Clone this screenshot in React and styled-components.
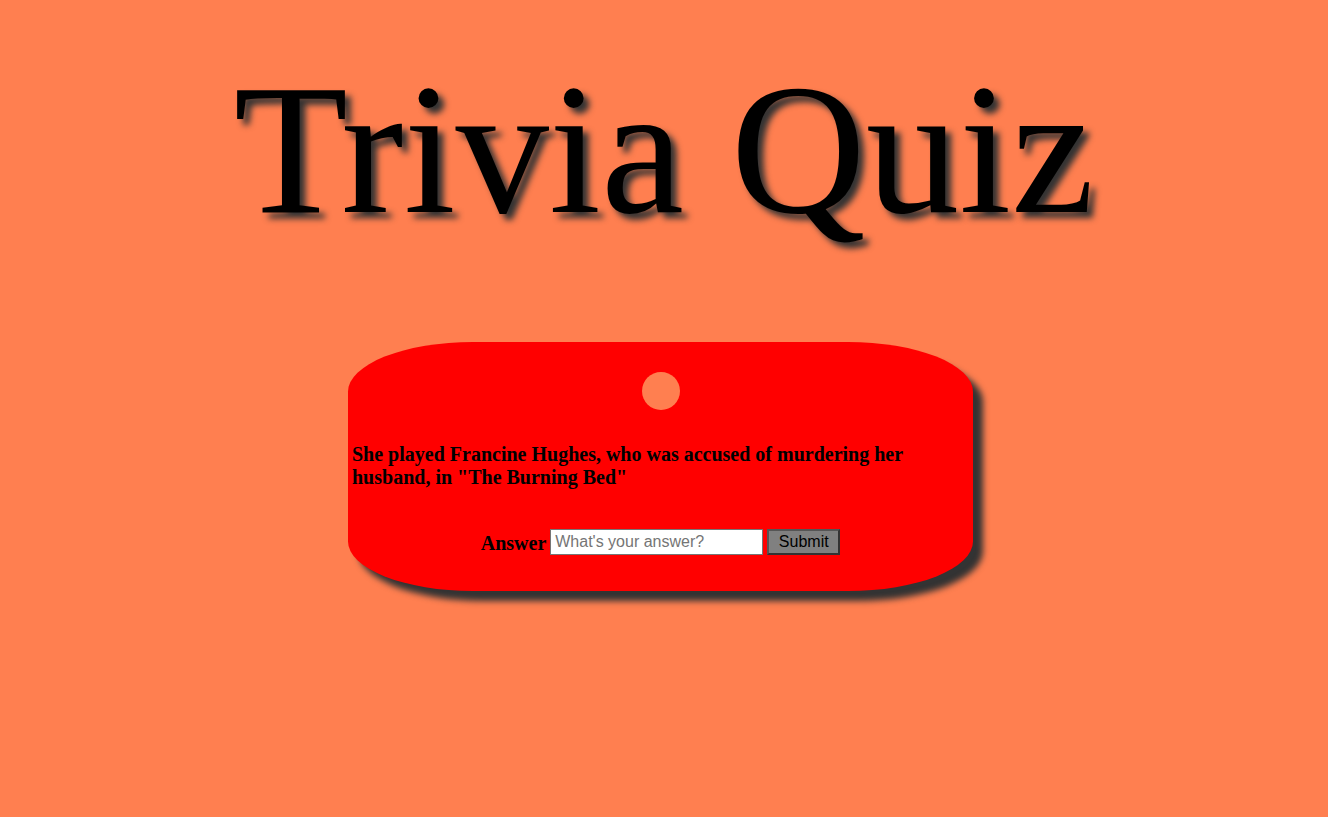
import React from 'react';
import styled, { createGlobalStyle } from 'styled-components';

const GlobalStyle = createGlobalStyle`
  html,
  body {
    background: #ff7f50;
    margin: 0;
    padding: 0;
  }

  body {
    font-family: 'Liberation Serif', 'Times New Roman', serif;
  }
`;

const Page = styled.div`
  min-height: 817px;
  padding-top: 42px;
  box-sizing: border-box;
`;

const Title = styled.h1`
  color: #000;
  font-family: 'Liberation Serif', 'Times New Roman', serif;
  font-size: 187px;
  font-weight: 400;
  line-height: 214px;
  margin: 0;
  text-align: center;
  text-shadow: 6px 6px 6px #333;
`;

const Card = styled.div`
  background: #ff0000;
  border-radius: 20%;
  box-shadow: 10px 10px 6px #333;
  box-sizing: border-box;
  height: 249px;
  margin: 86px 0 0 348px;
  padding: 30px 4px 0;
  width: 625px;
`;

const Hole = styled.div`
  background: #ff7f50;
  border-radius: 50%;
  height: 38px;
  margin: 0 auto;
  width: 38px;
`;

const Question = styled.p`
  font-size: 20px;
  font-weight: 700;
  line-height: 23px;
  margin: 33px 0 0;
  text-align: left;
`;

const AnswerForm = styled.form`
  align-items: center;
  display: flex;
  gap: 4px;
  justify-content: center;
  margin-top: 40px;
`;

const Label = styled.label`
  font-size: 20px;
  font-weight: 700;
  margin-top: 2px;
`;

const Input = styled.input`
  background: #fff;
  border: 1px solid #767676;
  box-sizing: border-box;
  font-family: 'Liberation Sans', Arial, sans-serif;
  font-size: 16px;
  height: 26px;
  padding: 1px 4px;
  width: 213px;

  &::placeholder {
    color: #757575;
  }
`;

const SubmitButton = styled.button`
  background: #808080;
  border: 2px solid;
  border-color: #555 #333 #333 #555;
  box-sizing: border-box;
  color: #000;
  font-family: 'Liberation Sans', Arial, sans-serif;
  font-size: 16px;
  height: 26px;
  padding: 0;
  width: 73px;
`;

export default function App() {
  return (
    <Page>
      <GlobalStyle />
      <Title>Trivia Quiz</Title>
      <Card>
        <Hole />
        <Question>
          She played Francine Hughes, who was accused of murdering her husband, in "The Burning Bed"
        </Question>
        <AnswerForm onSubmit={(e) => e.preventDefault()}>
          <Label htmlFor="answer">Answer</Label>
          <Input id="answer" type="text" placeholder="What's your answer?" />
          <SubmitButton type="submit">Submit</SubmitButton>
        </AnswerForm>
      </Card>
    </Page>
  );
}
